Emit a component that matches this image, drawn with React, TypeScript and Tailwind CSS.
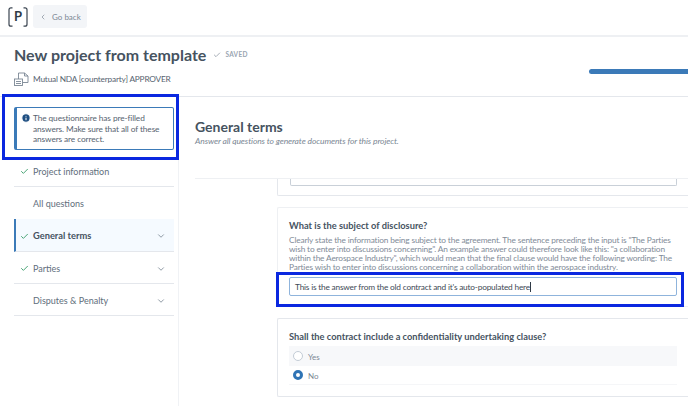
import { Check, ChevronDown, ChevronLeft, Info } from "lucide-react";

const navItems = [
  { label: "Project information", checked: true, chevron: false, active: false, border: true },
  { label: "All questions", checked: false, chevron: false, active: false, border: false },
  { label: "General terms", checked: true, chevron: true, active: true, border: true },
  { label: "Parties", checked: true, chevron: true, active: false, border: true },
  { label: "Disputes & Penalty", checked: false, chevron: true, active: false, border: true },
];

function DocIcon() {
  return (
    <svg width="15" height="14" viewBox="0 0 15 14" fill="none" stroke="#7b8794" strokeWidth="0.9">
      <path d="M4.500 7V1h6l3.500 3v6.500H9" />
      <path d="M10.500 1v3h3.500" />
      <rect x="0.500" y="7" width="8" height="6.500" />
      <path d="M2 9.500h5M2 11.500h5" />
    </svg>
  );
}

function Bracket({ flip }: { flip?: boolean }) {
  return (
    <svg width="5" height="20" viewBox="0 0 5 20" fill="none" stroke="#3a4450" strokeWidth="1.2" className={flip ? "-scale-x-100" : ""}>
      <path d="M4.500 0.800H3C1.700 0.800 1 1.500 1 2.800v14.400c0 1.300 0.700 2 2 2h1.500" />
    </svg>
  );
}

export default function App() {
  return (
    <div className="relative w-[688px] h-[406px] overflow-hidden bg-white font-['Lato',sans-serif]">
      {/* Top bar */}
      <header className="flex items-center h-[37px] pl-[8px] border-b-2 border-[#eef0f3]">
        <div className="flex items-center justify-between w-[20px] h-[20px] mt-[-2px] text-[13px] font-bold text-[#2f3a46]">
          <Bracket />
          P
          <Bracket flip />
        </div>
        <button className="flex items-center ml-[5px] mt-[-2px] w-[54px] h-[23px] pl-[6px] rounded-[3px] bg-[#f3f5f8] text-[8px] text-[#7b8794] whitespace-nowrap">
          <ChevronLeft className="w-[8px] h-[8px]" strokeWidth={2} />
          <span className="ml-[5px]">Go back</span>
        </button>
      </header>

      {/* Title */}
      <div className="h-[60px] border-b border-[#e4e7ec] relative">
        <div className="flex items-center pl-[14px] pt-[7px]">
          <h1 className="text-[16px] leading-[22px] font-bold text-[#46535f]">New project from template</h1>
          <Check className="ml-[7px] w-[8px] h-[8px] text-[#7b8794]" strokeWidth={2} />
          <span className="ml-[4px] text-[6.500px] font-bold tracking-[0.3px] text-[#9aa5b1]">SAVED</span>
        </div>
        <div className="flex items-center pl-[14px] mt-[6px] gap-[4px]">
          <DocIcon />
          <span className="text-[8.300px] tracking-[-0.2px] text-[#56636f]">Mutual NDA [counterparty] APPROVER</span>
        </div>
        <div className="absolute right-0 top-[32px] w-[99px] h-[5px] rounded-l-full bg-[#3b7ab8]" />
      </div>

      <div className="flex h-[309px]">
        {/* Sidebar */}
        <aside className="w-[179px] shrink-0 border-r border-[#f0f2f5] pl-[14px] pt-[10px]">
          <div className="flex w-[160px] h-[43px] pl-[4px] pr-[4px] pt-[5px] mb-[5px] gap-[2px] rounded-[2px] border border-[#3b7ab8] border-l-[3px] text-[8.300px] tracking-[-0.1px] leading-[10.500px] text-[#56636f]">
            <Info className="w-[10px] h-[10px] shrink-0 fill-[#1f4f82] text-white" strokeWidth={2.500} />
            <p>The questionnaire has pre-filled answers. Make sure that all of these answers are correct.</p>
          </div>
          {navItems.map((item) => (
            <div
              key={item.label}
              className={`flex items-center w-[160px] pt-[2px] ${item.active ? "h-[33px]" : "h-[32px]"} ${
                item.active
                  ? "border-l-2 border-l-[#3b7ab8] bg-[#f5faff] text-[9.300px] font-bold text-[#46535f]"
                  : "text-[9px] text-[#616e7c] pl-[2px]"
              } ${item.border ? "border-b border-b-[#e4e7ec]" : ""}`}
            >
              <span className="flex justify-center w-[17px]">
                {item.checked && <Check className="w-[9px] h-[9px] text-[#3f9f6e]" strokeWidth={2.500} />}
              </span>
              <span>{item.label}</span>
              {item.chevron && <ChevronDown className="ml-auto mr-[8px] w-[10px] h-[10px] text-[#7b8794]" strokeWidth={2} />}
            </div>
          ))}
        </aside>

        {/* Content */}
        <main className="flex-1 min-w-0 pl-[16px]">
          <div className="h-[82px] pt-[20px] border-b border-[#eef0f3]">
            <h2 className="text-[14px] leading-[19px] font-bold text-[#46535f]">General terms</h2>
            <p className="text-[8.500px] tracking-[-0.1px] leading-[11px] italic text-[#7b8794]">
              Answer all questions to generate documents for this project.
            </p>
          </div>
          <div className="h-[227px] overflow-hidden ml-[82px]">
            <div className="h-[17px] border-l border-b border-[#e4e7ec] rounded-bl-[2px] pl-[12px] pr-[11px]">
              <div className="h-[7px] border-x border-b border-[#c9d0d8] rounded-b-[2px]" />
            </div>
            <section className="h-[100px] mt-[11px] border border-r-0 border-[#eef0f3] rounded-l-[2px] pl-[11px] pr-[11px] pt-[12px]">
              <h3 className="text-[9.300px] leading-[12px] font-bold text-[#46535f]">What is the subject of disclosure?</h3>
              <p className="mt-[4px] text-[8.300px] tracking-[-0.15px] leading-[9px] text-[#7f8b98] whitespace-nowrap">
                Clearly state the information being subject to the agreement. The sentence preceding the input is "The Parties
                <br />
                wish to enter into discussions concerning". An example answer could therefore look like this: "a collaboration
                <br />
                within the Aerospace Industry", which would mean that the final clause would have the following wording: The
                <br />
                Parties wish to enter into discussions concerning a collaboration within the aerospace industry.
              </p>
              <div className="flex items-center h-[19px] mt-[5px] pl-[5px] pt-px rounded-[2px] border border-[#8fb4dc] text-[8.300px] tracking-[-0.2px] text-[#3e4a56]">
                This is the answer from the old contract and it's auto-populated here
                <span className="w-px h-[10px] bg-[#2f3a46]" />
              </div>
            </section>
            <section className="h-[79px] mt-[11px] border border-r-0 border-[#e4e7ec] rounded-l-[2px] pl-[11px] pr-[11px] pt-[12px]">
              <h3 className="text-[9.300px] leading-[12px] font-bold text-[#46535f]">Shall the contract include a confidentiality undertaking clause?</h3>
              <div className="flex items-center gap-[5px] h-[20px] mt-[3px] pl-[4px] bg-[#f7f8fa] text-[8px] text-[#7b8794]">
                <span className="w-[10px] h-[10px] rounded-full border border-[#c3ccd6] bg-white" />
                <span className="pt-[2px]">Yes</span>
              </div>
              <div className="flex items-center gap-[5px] h-[19px] pl-[4px] border-b border-[#f5f6f8] text-[8px] text-[#7b8794]">
                <span className="w-[10px] h-[10px] rounded-full border-[3px] border-[#2f74b5] bg-white" />
                <span className="pt-[2px]">No</span>
              </div>
            </section>
          </div>
        </main>
      </div>

      {/* Annotation highlights */}
      <div className="absolute left-[2px] top-[94px] w-[177px] h-[66px] border-[3px] border-[#0a28e0]" />
      <div className="absolute left-[276px] top-[272px] w-[408px] h-[35px] border-[3px] border-[#0a28e0]" />
    </div>
  );
}
